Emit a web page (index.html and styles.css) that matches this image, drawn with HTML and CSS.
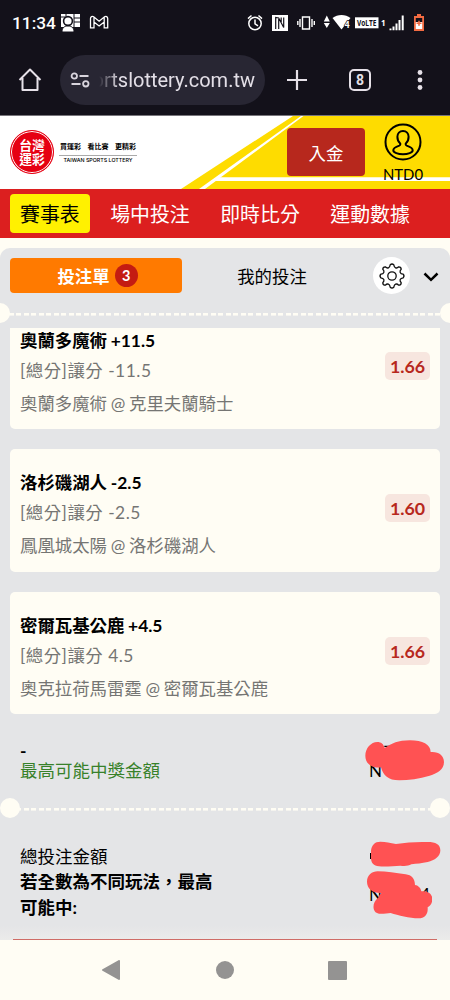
FILE: index.html
```
<!DOCTYPE html>
<html lang="zh-Hant">
<head>
  <meta charset="UTF-8">
  <meta name="viewport" content="width=device-width, initial-scale=1.0">
  <title>台灣運彩</title>
  <link rel="stylesheet" href="styles.css">
</head>
<body>
  <div class="status-bar">
    <span class="clock">11:34</span>
    <svg class="status-left" width="48" height="20" viewBox="0 0 48 20">
      <path d="M0 1h19v13H0z" fill="#fff"/>
      <path d="M13 1v13M13 5h6M13 9h6M0 4h4M5 1v3" stroke="#13111a" stroke-width="1"/>
      <circle cx="7" cy="8" r="4.4" fill="#fff" stroke="#13111a" stroke-width="1.6"/>
      <path d="M1 19c0-4 2-6 6-6s6 2 6 6z" fill="#fff" stroke="#13111a"/>
      <path d="M29.5 14.8V5.4c0-1.7 1.8-2.6 3.1-1.6l5.5 4.4 5.5-4.4c1.3-1 3.1-.1 3.1 1.6v9.4h-3.5V9l-5.1 4L33 9v5.8zM33 9V4.3M43.2 9V4.3" fill="none" stroke="#fff" stroke-width="1.3"/>
    </svg>
    <svg class="status-right" width="180" height="22" viewBox="246 12 180 22">
      <g fill="none" stroke="#fff" stroke-width="1.5">
        <circle cx="255" cy="23.5" r="6.2"/>
        <path d="M255 19.5v4.3l3 2M248 18.6l3.5-3.1M262 18.6l-3.5-3.1"/>
      </g>
      <path d="M272 15h16v16h-16z" fill="#fff"/>
      <path d="M275.7 29V17.500l3 .5 5 9.500V17.500M278.700 19v10M281.200 17.500v4.500" fill="none" stroke="#13111a" stroke-width="1.2"/>
      <path d="M302.5 17h7v12h-7zM300 19v8M297.8 21v4M312 19v8M314.3 21v4" fill="none" stroke="#fff" stroke-width="1.4"/>
      <path d="M323.8 21.5l3-6 3 6zM323.8 23l3 5 3-5z" fill="#fff"/>
      <path d="M332.5 18c5-4 13-4 18 0l-9 11.5z" fill="#fff"/>
      <text x="344.5" y="27.5" class="wifi-num">4</text>
      <path d="M355 17.3h23.5v11H355z" fill="#fff"/>
      <text x="357" y="26" class="volte" textLength="19.5" lengthAdjust="spacingAndGlyphs">VoLTE</text>
      <text x="381" y="26" class="sim">1</text>
      <path d="M389.5 28.5h2v1.8h-2zM392.5 26.5h2v3.8h-2zM395.5 23.5h2v6.8h-2zM398.5 20h2v10.3h-2zM401.7 15.5h2v14.8h-2z" fill="#fff"/>
      <path d="M417 14h4v2h3v15h-10V16h3z" fill="#f36b42"/>
      <path d="M415.8 18h6.4v4h-6.4z" fill="#13111a"/>
      <path d="M415.8 22h6.4v7h-6.4z" fill="#fff"/>
      <path d="M419 20.8v5M416.5 23.3h5" stroke="#f36b42" stroke-width="1.6"/>
    </svg>
  </div>

  <div class="browser-bar">
    <svg class="home" width="24" height="24" viewBox="0 0 24 24"><path d="M1.5 12L12 1.5 22.5 12M4.5 10v12h15V10" fill="none" stroke="#e6e1e8" stroke-width="2" stroke-linejoin="round"/></svg>
    <div class="url">
      <svg width="20" height="18" viewBox="0 0 20 18"><g fill="none" stroke="#d8d4dd" stroke-width="1.8"><circle cx="4.3" cy="5" r="2.7"/><circle cx="15.8" cy="12.8" r="2.7"/><path d="M9.5 5h9M1.5 13h9"/></g></svg>
      <span class="url-text">ortslottery.com.tw</span>
    </div>
    <svg class="plus" width="20" height="20" viewBox="0 0 20 20"><path d="M10 0v20M0 10h20" stroke="#e6e1e8" stroke-width="2.2"/></svg>
    <span class="tab-count">8</span>
    <svg class="more" width="6" height="20" viewBox="0 0 6 20"><g fill="#e6e1e8"><circle cx="3" cy="2.5" r="2.4"/><circle cx="3" cy="10" r="2.4"/><circle cx="3" cy="17.5" r="2.4"/></g></svg>
  </div>

  <header class="site-header">
    <svg class="header-bg" width="450" height="73" viewBox="0 0 450 73">
      <path d="M181 73L293 0H450V73z" fill="#fedc00"/>
      <path d="M199 73L301 0h2.5L205 73z" fill="#fff"/>
      <path d="M217 61.3H450v3.6H212z" fill="#fff"/>
    </svg>
    <div class="logo">
      <div class="logo-seal"><span class="seal-row">台灣</span><span class="seal-row">運彩</span></div>
      <div class="logo-text">
        <div class="slogan"><span>買運彩</span><span>看比賽</span><span>更精彩</span></div>
        <div class="logo-en">TAIWAN SPORTS LOTTERY</div>
      </div>
    </div>
    <button class="deposit">入金</button>
    <div class="account">
      <svg width="38" height="38" viewBox="0 0 38 38"><g fill="none" stroke="#000" stroke-width="2"><circle cx="19" cy="19" r="17.5"/><path d="M19 8c-3.4 0-5.6 2.4-5.6 5.8 0 2.8 1 5.1 2.6 6.5.7.7.3 1.9-.7 2.3-3.6 1.2-6 2.6-6 4.6 0 2.4 4.8 4 9.7 4s9.7-1.6 9.7-4c0-2-2.4-3.4-6-4.6-1-.4-1.4-1.6-.7-2.3 1.6-1.4 2.6-3.7 2.6-6.5C24.6 10.4 22.4 8 19 8z"/></g></svg>
      <span class="balance">NTD0</span>
    </div>
  </header>

  <nav class="main-nav">
    <a class="active">賽事表</a>
    <a>場中投注</a>
    <a>即時比分</a>
    <a>運動數據</a>
  </nav>

  <main class="betslip">
    <div class="slip-tabs">
      <button class="tab-slip">投注單 <span class="badge">3</span></button>
      <span class="tab-mine">我的投注</span>
      <span class="settings">
        <svg width="28" height="28" viewBox="-14 -14 28 28"><g fill="none" stroke="#111" stroke-width="1.3" stroke-linejoin="round"><circle r="4.2"/><path d="M-1.8-11.2Q0-12.8 1.8-11.2C2.3-8 4.5-7 6.7-9.2Q9.2-9.2 9.2-6.7C7-4.5 8-2.3 11.2-1.8Q12.8 0 11.2 1.8C8 2.3 7 4.5 9.2 6.7Q9.2 9.2 6.7 9.2C4.5 7 2.3 8 1.8 11.2Q0 12.8-1.8 11.2C-2.3 8-4.5 7-6.7 9.2Q-9.2 9.2-9.2 6.7C-7 4.5-8 2.3-11.2 1.8Q-12.8 0-11.2-1.8C-8-2.3-7-4.5-9.2-6.7Q-9.2-9.2-6.7-9.2C-4.5-7-2.3-8-1.8-11.2z"/></g></svg>
      </span>
      <svg class="chevron" width="16" height="10" viewBox="0 0 16 10"><path d="M1.5 1.5L8 7.8l6.5-6.3" fill="none" stroke="#000" stroke-width="2.5"/></svg>
    </div>

    <div class="divider edge"></div>

    <div class="bets">
      <section class="bet">
        <div class="bet-info">
          <h3>奧蘭多魔術 +11.5</h3>
          <p class="market">[總分]讓分 -11.5</p>
          <p class="teams">奧蘭多魔術 @ 克里夫蘭騎士</p>
        </div>
        <span class="odds">1.66</span>
      </section>
      <section class="bet">
        <div class="bet-info">
          <h3>洛杉磯湖人 -2.5</h3>
          <p class="market">[總分]讓分 -2.5</p>
          <p class="teams">鳳凰城太陽 @ 洛杉磯湖人</p>
        </div>
        <span class="odds">1.60</span>
      </section>
      <section class="bet">
        <div class="bet-info">
          <h3>密爾瓦基公鹿 +4.5</h3>
          <p class="market">[總分]讓分 4.5</p>
          <p class="teams">奧克拉荷馬雷霆 @ 密爾瓦基公鹿</p>
        </div>
        <span class="odds">1.66</span>
      </section>
    </div>

    <div class="summary">
      <div class="summary-label">
        <b class="dash">-</b>
        <span class="win">最高可能中獎金額</span>
      </div>
      <div class="amount amount-win">
        <span>N</span>
        <svg class="scribble" width="79.3" height="40.7" viewBox="419 60 238 122"><path d="M477 77h19v4h-8v14h-5V81h-6z" fill="#000"/><path d="M456 66c12 0 18 6 22 18 22-14 40-23 76-23 38 0 62 13 62 35 24-2 40 10 40 30 0 23-19 34-43 41-31 9-63 14-91 14-34 0-48-14-55-39-27 4-47-11-47-35 0-22 17-41 36-41z" fill="#ff5253"/></svg>
      </div>
    </div>

    <div class="divider"></div>

    <div class="totals">
      <div class="totals-label">
        <div>總投注金額</div>
        <b>若全數為不同玩法，最高可能中:</b>
      </div>
      <div class="amount amount-total">
        <span>N</span>
        <span class="last-digit">4</span>
        <svg class="scribble stake" width="70.7" height="25.7" viewBox="435 364 212 77"><path d="M435 400h5v18h-5zM598 418h9v6h-9z" fill="#000"/><path d="M466 366c17 0 29 4 47 7 31-5 61-7 95-6 24 0 38 7 38 25 0 19-17 30-38 35-18 4-33 5-49 7-9 4-18 7-33 4-18 1-45 4-64 2-16-2-24-10-24-25v-22c2-17 11-27 28-27z" fill="#ff5253"/></svg>
        <svg class="scribble payout" width="65.3" height="47.7" viewBox="426 453 196 143"><path d="M458 454c27 0 54 5 84 9 18 2 28 13 28 32 9 1 17 8 19 19 18-3 33 7 33 23 0 12-5 20-14 25 2 21-9 33-27 33-28 0-61-9-84-16-10 1-24 3-35 2-22-3-21-35-3-46 2-6 5-11 10-16-27 1-43-14-43-34 0-20 15-31 32-31z" fill="#ff5253"/></svg>
      </div>
    </div>
    <div class="slip-footer"></div>
  </main>

  <footer class="android-nav">
    <svg width="18" height="20" viewBox="0 0 18 20"><path d="M17 1v18L1 10z" fill="#949392" stroke="#949392" stroke-linejoin="round" stroke-width="2"/></svg>
    <span class="nav-home"></span>
    <span class="nav-recent"></span>
  </footer>
</body>
</html>
```

FILE: styles.css
```
* {
  box-sizing: border-box;
}

body {
  margin: 0;
  width: 450px;
  height: 1000px;
  overflow: hidden;
  display: flex;
  flex-direction: column;
  background: #fffdf4;
  color: #000;
  font-family: Lato, "Noto Sans CJK TC", sans-serif;
  font-size: 17.4px;
}

svg {
  display: block;
  flex: none;
}

button {
  border: none;
  padding: 0;
  font-family: inherit;
}

h3,
p {
  margin: 0;
}

/* phone status bar */
.status-bar {
  height: 46px;
  flex: none;
  display: flex;
  align-items: center;
  padding: 0 24px 0 12px;
  background: #13111a;
}

.clock {
  width: 49px;
  color: #fff;
  font: 500 17.3px Roboto, sans-serif;
}

.status-left {
  margin-top: -1px;
}

.status-right {
  margin-left: auto;
}

.wifi-num {
  font: bold 9px Roboto, sans-serif;
  fill: #fff;
  stroke: #13111a;
  stroke-width: 1.5px;
  paint-order: stroke;
}

.volte {
  font: bold 8.5px "Open Sans", sans-serif;
  fill: #13111a;
}

.sim {
  font: bold 8px "Open Sans", sans-serif;
  fill: #fff;
}

/* browser toolbar */
.browser-bar {
  height: 70px;
  flex: none;
  display: flex;
  align-items: center;
  padding: 0 27px 1px 18px;
  background: #13111a;
  border-bottom: 1px solid #77757b;
}

.url {
  width: 205px;
  height: 50px;
  margin-left: 18px;
  padding-left: 10px;
  display: flex;
  align-items: center;
  border-radius: 25px;
  background: #282633;
}

.url-text {
  width: 156px;
  margin-left: 9px;
  display: flex;
  justify-content: flex-end;
  overflow: hidden;
  white-space: nowrap;
  color: #e3dfe7;
  font: 20px Roboto, sans-serif;
  mask-image: linear-gradient(90deg, transparent, #000 20px);
}

.plus {
  margin-left: 22px;
}

.tab-count {
  width: 22px;
  height: 22px;
  margin-left: 42px;
  border: 2px solid #e6e1e8;
  border-radius: 5px;
  color: #e6e1e8;
  font: bold 14px/18px Roboto, sans-serif;
  text-align: center;
}

.more {
  margin-left: auto;
}

/* site header */
.site-header {
  position: relative;
  height: 73px;
  flex: none;
  display: flex;
  align-items: flex-start;
  background: #fff;
}

.header-bg {
  position: absolute;
  top: 0;
  left: 0;
}

.logo {
  position: relative;
  display: flex;
  width: 287px;
  padding: 14px 0 0 10px;
}

.logo-seal {
  width: 44px;
  height: 44px;
  display: flex;
  flex-direction: column;
  align-items: center;
  justify-content: center;
  border: 1px solid #e60012;
  border-radius: 50%;
  background: #e60012;
  box-shadow: inset 0 0 0 1px #fff;
}

.seal-row {
  height: 14px;
  color: #fff;
  font-weight: bold;
  font-size: 12.8px;
  line-height: 14px;
}

.logo-text {
  width: 78px;
  margin: 10px 0 0 5px;
}

.slogan {
  display: flex;
  justify-content: space-between;
  height: 16px;
  padding: 0 1px;
  border-bottom: 1px solid #aaa;
  font-weight: bold;
  font-size: 7px;
  line-height: 12px;
}

.logo-en {
  font: 500 5.3px/9px Inter, sans-serif;
  text-align: center;
  white-space: nowrap;
}

.deposit {
  position: relative;
  width: 78px;
  height: 48px;
  margin-top: 12px;
  border-radius: 4px;
  background: #b7281d;
  color: #fff;
  font-size: 17.4px;
}

.account {
  position: relative;
  width: 42px;
  margin: 7px 0 0 17px;
  display: flex;
  flex-direction: column;
  align-items: center;
}

.balance {
  margin-top: 3px;
  font-size: 14.9px;
  line-height: 20px;
}

/* main nav */
.main-nav {
  height: 49px;
  flex: none;
  display: flex;
  align-items: center;
  padding: 0 10px;
  background: #dc1f1f;
}

.main-nav a {
  height: 39px;
  padding: 0 10px;
  margin-right: 10.5px;
  border-radius: 4px;
  color: #fff;
  font-size: 19.9px;
  line-height: 41px;
}

.main-nav .active {
  background: #fff100;
  color: #000;
}

/* bet slip */
.betslip {
  height: 692px;
  flex: none;
  margin-top: 10px;
  overflow: hidden;
  display: flex;
  flex-direction: column;
  border-radius: 10px 10px 0 0;
  background: #e4e5e7;
}

.slip-tabs {
  height: 55px;
  flex: none;
  display: flex;
  align-items: center;
  padding: 0 11px 0 10px;
}

.tab-slip {
  width: 172px;
  height: 35px;
  display: flex;
  align-items: center;
  justify-content: center;
  gap: 5px;
  padding-left: 3px;
  border-radius: 4px;
  background: #ff7a00;
  color: #fff;
  font-size: 17.4px;
  font-weight: bold;
}

.badge {
  width: 23px;
  height: 23px;
  border-radius: 50%;
  background: #c41c12;
  font-size: 14.5px;
  line-height: 23px;
}

.tab-mine {
  width: 180px;
  text-align: center;
}

.settings {
  width: 37px;
  height: 37px;
  margin-left: 11px;
  display: flex;
  align-items: center;
  justify-content: center;
  border-radius: 50%;
  background: #fff;
}

.chevron {
  margin: 2px 0 0 auto;
}

.divider {
  height: 20px;
  flex: none;
  display: flex;
  align-items: center;
  justify-content: space-between;
  background: repeating-linear-gradient(90deg, #fffdf4 0 5px, transparent 5px 7.48px) 9px 10px / 432px 2.6px no-repeat;
}

.divider::before,
.divider::after {
  content: "";
  width: 20px;
  height: 20px;
  border-radius: 50%;
  background: #fffdf4;
}

.edge {
  margin: 0 -10px;
  background-position: 19px 10px;
}

/* the list is scrolled, so the first card is cut at the top */
.bets {
  height: 386px;
  flex: none;
  margin: 5px 10px 0;
  display: flex;
  flex-direction: column;
  justify-content: flex-end;
  gap: 20px;
  overflow: hidden;
}

.bet {
  height: 122.3px;
  flex: none;
  display: flex;
  justify-content: space-between;
  padding: 19.9px 10px 0;
  border-radius: 5px;
  background: #fffdf4;
}

.bet h3 {
  font-size: 17.4px;
  font-weight: bold;
  line-height: 27px;
  word-spacing: -0.5px;
}

.market {
  color: #757573;
  font-size: 17.4px;
  line-height: 33px;
  letter-spacing: 0.5px;
}

.teams {
  color: #757573;
  line-height: 34px;
  word-spacing: -0.7px;
}

.odds {
  width: 45px;
  height: 28px;
  margin-top: 25.2px;
  border-radius: 5px;
  background: #f7e6df;
  color: #b7281d;
  font-size: 17.8px;
  font-weight: bold;
  line-height: 29px;
  text-align: center;
}

/* winnings */
.summary {
  height: 84px;
  flex: none;
  display: flex;
  justify-content: space-between;
  padding: 26px 0 0 20px;
}

.summary-label {
  display: flex;
  flex-direction: column;
}

.dash {
  height: 18px;
  line-height: 22px;
}

.win {
  color: #37812a;
  font-size: 17.5px;
  line-height: 26px;
}

.amount {
  position: relative;
  width: 86px;
  padding-left: 5px;
  font-size: 17px;
}

.amount-win {
  padding-top: 20px;
}

.scribble {
  position: absolute;
  top: 0;
  left: 1px;
}

.totals {
  height: 122px;
  flex: none;
  display: flex;
  justify-content: space-between;
  padding: 26px 0 0 20px;
}

.totals-label {
  width: 196px;
  font-size: 17.5px;
  line-height: 25.4px;
}

.amount-total {
  padding-top: 40px;
}

.last-digit {
  margin-left: 34px;
}

.scribble.stake {
  top: -3px;
  left: 6px;
}

.scribble.payout {
  top: 27px;
  left: 3px;
}

.slip-footer {
  height: 14px;
  flex: none;
  margin-top: -14px;
  padding: 0 13px;
  display: flex;
  align-items: flex-end;
  background: linear-gradient(#e4e5e7, #ebebea);
}

.slip-footer::after {
  content: "";
  flex: 1;
  height: 1px;
  background: #cf6c66;
}

/* android buttons */
.android-nav {
  height: 60px;
  flex: none;
  display: flex;
  align-items: center;
  justify-content: space-between;
  padding: 0 103px 0 102px;
  background: #fffdf4;
}

.nav-home {
  width: 18px;
  height: 18px;
  margin-left: 2px;
  border-radius: 50%;
  background: #949392;
}

.nav-recent {
  width: 19px;
  height: 19px;
  border-radius: 1px;
  background: #949392;
}
```
